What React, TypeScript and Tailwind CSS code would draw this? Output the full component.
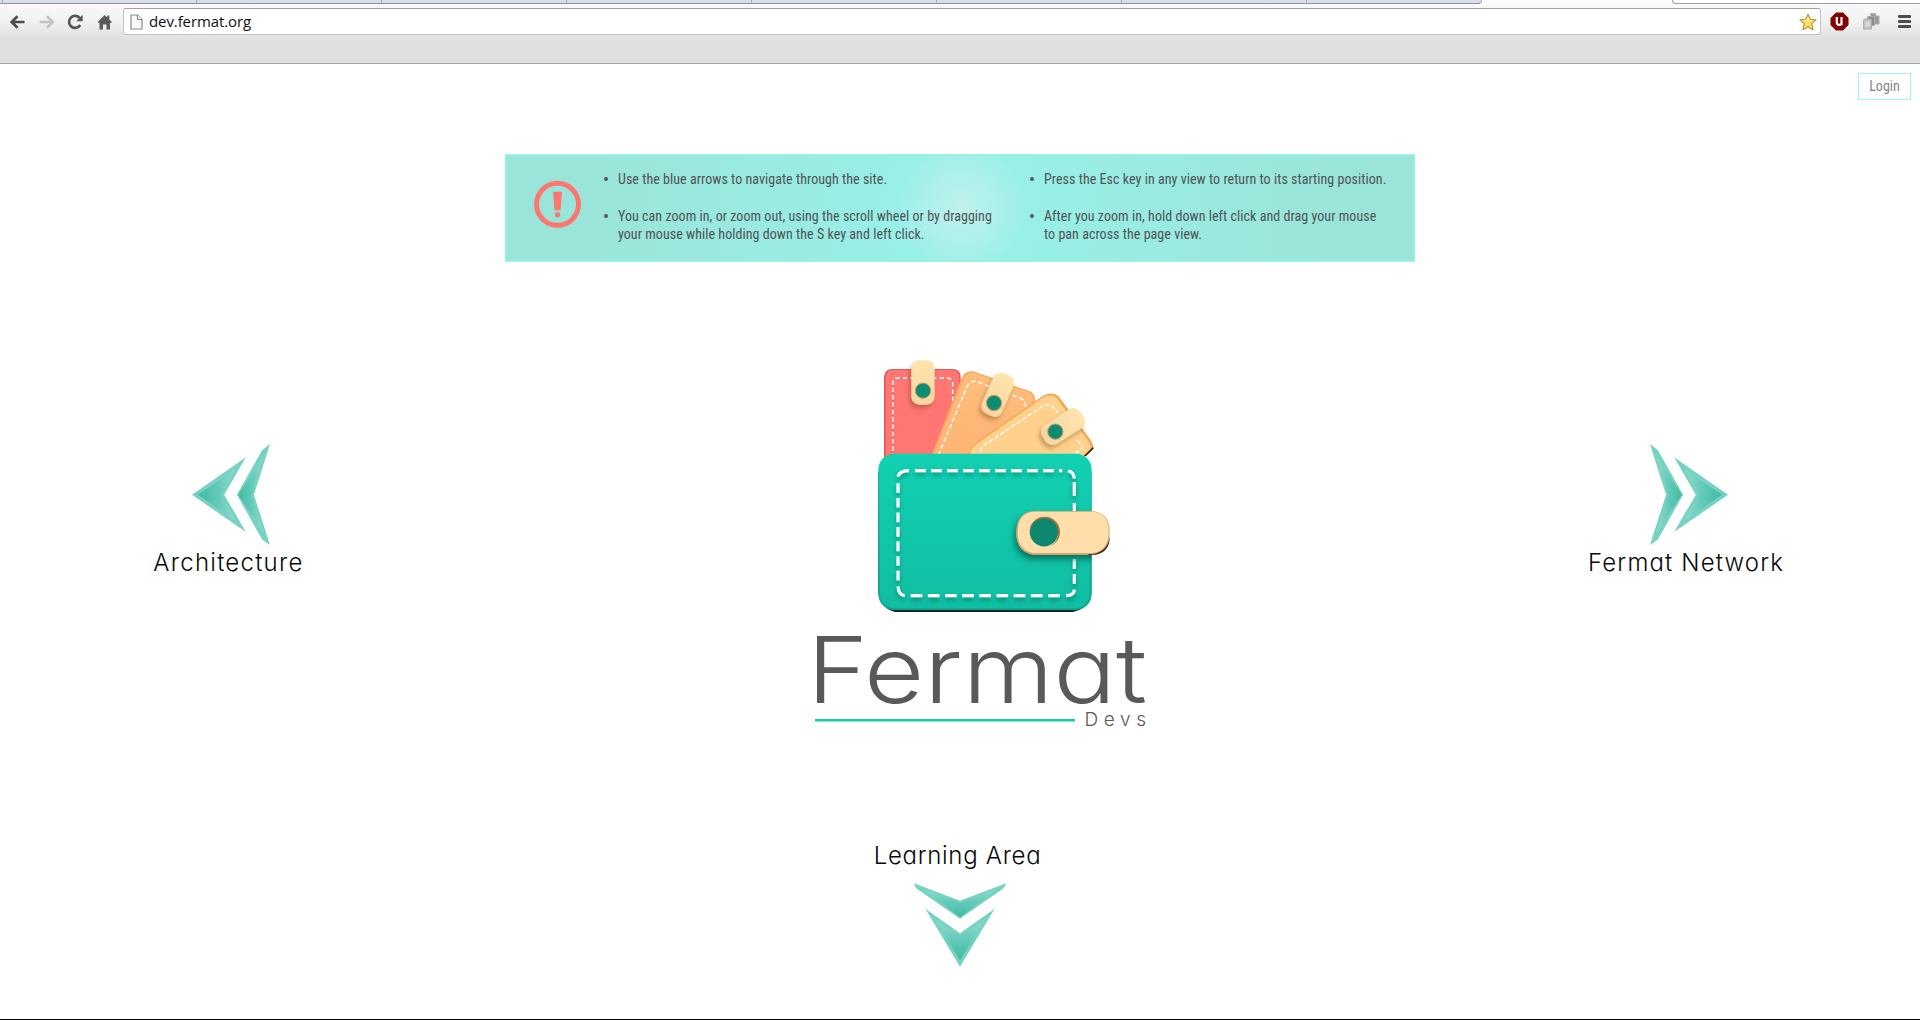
import React from "react";

const LABEL =
  "font-['Inter',sans-serif] font-[260] text-[24px] leading-[30px] text-[#0a0a0a] whitespace-nowrap [font-feature-settings:'cv11']";
const COND = "font-['Roboto',sans-serif] [font-stretch:75%]";

function TabStrip() {
  return (
    <div className="flex h-1 w-full">
      <div className="h-1 w-[2px] border-b border-[#9b9eae] bg-[#d9dfe8]" />
      {[0, 1, 2, 3, 4, 5, 6, 7].map((i) => (
        <div
          key={i}
          className={
            "h-1 border-b border-l border-b-[#9093a6] border-l-[#a9adba] bg-[#d9dfe8] " +
            (i === 0 ? "w-[194px]" : i === 7 ? "w-[176px] rounded-br-[4px] border-r border-r-[#a9adba]" : "w-[185px]")
          }
        />
      ))}
      <div className="h-1 flex-1 bg-[#fbfbfb]" />
      <div className="h-1 w-[248px] rounded-bl-[4px] border-b border-l border-[#9d9d9d] bg-white" />
    </div>
  );
}

function Browser() {
  return (
    <header className="h-16 shrink-0 border-b border-[#a2a2a2] bg-[linear-gradient(#fbfbfb_0px,#f1f1f1_22px,#e1e1e1_38px,#dfdfdf_62px)]">
      <TabStrip />
      <div className="flex h-[35px] items-center">
        <svg className="ml-[9px] h-4 w-4" viewBox="0 0 16 16" fill="none" stroke="#4b4b4b" strokeWidth="2.7">
          <path d="M15.500 8H2.500M8.500 2.200 2.700 8l5.800 5.800" />
        </svg>
        <svg className="ml-[13px] h-4 w-4" viewBox="0 0 16 16" fill="none" stroke="#c3c3c3" strokeWidth="2.7">
          <path d="M1.500 8h13M9 2.200l5.800 5.800-5.800 5.800" />
        </svg>
        <svg className="ml-[13px] h-4 w-4" viewBox="0 0 16 16" fill="none">
          <path d="M12.800 4.200A6 6 0 1 0 13.200 11" stroke="#555" strokeWidth="2.700" />
          <path d="M15.600 .8v6.400H9.200z" fill="#555" />
        </svg>
        <svg className="ml-3.5 h-4 w-4" viewBox="0 0 16 16" fill="#5a5a5a">
          <path d="M7.500 1 .6 8.200 1.700 9 2.500 8.400V15.500H6V10.500H9.500V15.500H13V8.400L14 9 15 8.200 12.300 5.400V1.500H10.300V3.500Z" />
        </svg>
        <div className="ml-[10px] flex h-[27px] w-[1698px] items-center rounded-[3px] border border-[#c4c4c4] border-t-[#a2a2a2] bg-white">
          <svg className="ml-[6px] h-4 w-[13px]" viewBox="0 0 13 16" fill="#f8f8f8" stroke="#8a8a8a" strokeWidth="1.200">
            <path d="M1 1h6.500L12 5.500V15H1z" />
            <path d="M7.500 1v4.500H12" fill="#fff" />
          </svg>
          <span className="mt-[-2px] ml-1.5 font-['Open_Sans',sans-serif] text-[15px] leading-5 tracking-[-0.1px] text-[#111]">
            dev.fermat.org
          </span>
          <svg className="mr-[3px] ml-auto h-[18px] w-[18px]" viewBox="0 0 18 18">
            <path
              d="M9 1.200 11.300 6.300 17 6.800 12.700 10.700 14 16.700 9 13.800 4 16.700 5.300 10.700 1 6.800 6.700 6.300Z"
              fill="#ffe066"
              stroke="#c58a3c"
              strokeWidth="1.100"
              strokeLinejoin="round"
            />
            <path d="M9 3.500 10.500 7.300 14 7.600 4 8.500 7.300 7.300Z" fill="#fff2a8" />
          </svg>
        </div>
        <svg className="ml-[9px] h-[19px] w-[19px]" viewBox="0 0 19 19">
          <path d="M6 .5h7L18.500 6v7L13 18.500H6L.5 13V6z" fill="#800000" />
          <path d="M6.800 5v5.500q0 2.300 2.500 2.300 2.200 0 2.200-2V5v8.300" fill="none" stroke="#fff" strokeWidth="2.200" />
        </svg>
        <svg className="ml-[14px] h-[17px] w-[17px]" viewBox="0 0 17 17" stroke="#aaa">
          <path d="M7.500.7h5V3H16v8h-6z" fill="#999" />
          <path d="M4.500 3.500h7v9h-7z" fill="#8b8b8b" />
          <path d="M.6 7.500q0-1.500 1.500-1.500H7q1.500 0 1.500 1.500V16H.6z" fill="#c4c4c4" />
          <path d="M3 9h3.500v4.500H3z" fill="#ddd" stroke="none" />
        </svg>
        <div className="ml-[18px] flex w-[13px] flex-col gap-[2px]">
          <div className="h-[3px] rounded-[1px] bg-[#4d4f4d]" />
          <div className="h-[3px] rounded-[1px] bg-[#4d4f4d]" />
          <div className="h-[3px] rounded-[1px] bg-[#4d4f4d]" />
        </div>
      </div>
    </header>
  );
}

function Tip({ children }: { children: React.ReactNode }) {
  return (
    <li className="flex">
      <span className="mt-[7px] mr-[10px] h-1 w-1 shrink-0 rounded-full bg-[#55585b]" />
      <span>{children}</span>
    </li>
  );
}

function Banner() {
  return (
    <section className="mx-auto mt-[54px] flex h-[108px] w-[910px] shrink-0 border-2 border-[#98f0e7] bg-[radial-gradient(circle_at_455px_52px,#c0f1ec_0px,#aaf0ea_40px,#98f0e7_66px,#9ae6db_320px,#9ae4d9_460px)]">
      <svg className="mt-[24px] ml-[26px] h-12 w-12 shrink-0" viewBox="0 0 48 48">
        <circle cx="24.500" cy="24.300" r="21" fill="none" stroke="#ff766f" strokeWidth="5" />
        <path d="M20 11.800h9L27.500 30.300h-6z" fill="#ff766f" />
        <circle cx="24.500" cy="34.700" r="2.700" fill="#ff766f" />
      </svg>
      <div
        className={
          COND + " flex pt-[14px] pl-[23px] text-[14px] leading-[18px] tracking-[0.045px] whitespace-nowrap text-[#505356]"
        }
      >
        <ul className="flex w-[426px] flex-col gap-[19px]">
          <Tip>Use the blue arrows to navigate through the site.</Tip>
          <Tip>
            You can zoom in, or zoom out, using the scroll wheel or by dragging
            <br />
            your mouse while holding down the S key and left click.
          </Tip>
        </ul>
        <ul className="flex flex-col gap-[19px]">
          <Tip>Press the Esc key in any view to return to its starting position.</Tip>
          <Tip>
            After you zoom in, hold down left click and drag your mouse
            <br />
            to pan across the page view.
          </Tip>
        </ul>
      </div>
    </section>
  );
}

function Arrow({ id, className }: { id: string; className: string }) {
  return (
    <svg className={className} viewBox="0 0 233 303" preserveAspectRatio="none">
      <defs>
        <linearGradient id={id + "a"} x1="0" x2="1">
          <stop offset="0" stopColor="#40baa2" />
          <stop offset=".55" stopColor="#65cbb8" />
          <stop offset="1" stopColor="#93dacf" />
        </linearGradient>
      </defs>
      <path d="M0 152 161 40 96 152 161 264Z" fill="#76d2c3" />
      <path d="M18 152 130 75 88 152 130 229Z" fill={"url(#" + id + "a)"} />
      <path d="M134 152 210 18 233 0 185 152 233 303 210 287Z" fill="#76d2c3" />
      <path d="M138 152 214 38 178 152 214 267Z" fill={"url(#" + id + "a)"} />
    </svg>
  );
}

function DownArrow() {
  return (
    <svg className="mt-[12px] h-[84px] w-[92px]" viewBox="0 0 276 251">
      <defs>
        <linearGradient id="dn" x1="0" x2="0" y1="0" y2="1">
          <stop offset="0" stopColor="#93dacf" />
          <stop offset=".45" stopColor="#65cbb8" />
          <stop offset="1" stopColor="#40baa2" />
        </linearGradient>
      </defs>
      <path d="M0 0 138 53 276 0Q272 16 256 24L138 107 16 22Q3 15 0 0Z" fill="#76d2c3" />
      <path d="M30 18 138 59 246 18 138 102Z" fill="url(#dn)" />
      <path d="M34 77 138 150 242 77 138 251Z" fill="#76d2c3" />
      <path d="M66 111 138 158 210 111 138 233Z" fill="url(#dn)" />
    </svg>
  );
}

function Wallet() {
  return (
    <svg className="ml-[70px] h-[270px] w-[250px]" viewBox="0 0 750 810">
      <defs>
        <linearGradient id="body" x1="0" y1="0" x2="0" y2="1">
          <stop offset="0" stopColor="#12d0b1" />
          <stop offset="1" stopColor="#10bea2" />
        </linearGradient>
        <linearGradient id="edge" x1="0" y1="0" x2="0" y2="1">
          <stop offset="0" stopColor="#08d5b2" />
          <stop offset="1" stopColor="#0ba58c" />
        </linearGradient>
        <linearGradient id="orange" x1="0" y1="0" x2="0" y2="1">
          <stop offset="0" stopColor="#ffbd7a" />
          <stop offset="1" stopColor="#ffb376" />
        </linearGradient>
        <linearGradient id="strap" x1="0" y1="0" x2="0" y2="1">
          <stop offset="0" stopColor="#ffe4ae" />
          <stop offset="1" stopColor="#f9d5a2" />
        </linearGradient>
        <filter id="soft" x="-30%" y="-30%" width="160%" height="160%">
          <feDropShadow dx="-6" dy="10" stdDeviation="7" floodColor="#5a3010" floodOpacity=".35" />
        </filter>
        <filter id="deep" x="-30%" y="-30%" width="160%" height="170%">
          <feDropShadow dx="-6" dy="14" stdDeviation="9" floodColor="#03483c" floodOpacity=".65" />
        </filter>
        <filter id="stitch" x="-10%" y="-10%" width="120%" height="120%">
          <feDropShadow dx="0" dy="9" stdDeviation="6" floodColor="#056454" floodOpacity=".6" />
        </filter>
        <clipPath id="top">
          <path d="M0 0H750V330H0Z" />
        </clipPath>
        <clipPath id="green">
          <rect x="25" y="310" width="640" height="475" rx="48" />
        </clipPath>
      </defs>

      <g clipPath="url(#top)">
        <path d="M42 330V80Q44 58 66 57H250Q272 58 272 82V330Z" fill="#e05d5d" />
        <path d="M47 330V82Q48 61 68 60H246Q267 62 267 84V330Z" fill="#ff7673" />
        <path d="M69 330V96Q70 84 84 84H232Q248 86 248 100V200" fill="none" stroke="#c54d4e" strokeOpacity=".5" strokeWidth="5" strokeDasharray="14 8" />
        <path d="M69 325V96Q70 84 84 84H232Q248 86 248 100V200" fill="none" stroke="#fff" strokeWidth="4.500" strokeDasharray="14 8" />
        <g filter="url(#soft)">
          <rect x="124" y="31" width="70" height="133" rx="24" fill="url(#strap)" />
        </g>

        <path d="M183 320 274 86Q284 61 310 64L480 124Q500 135 494 160L430 330Z" fill="#f1ae62" />
        <path d="M188 320 281 88Q290 66 314 69L478 128Q494 138 487 160L430 330Z" fill="url(#orange)" />
        <path d="M205 316 292 108Q299 91 318 94L452 145Q470 153 466 174L458 200" fill="none" stroke="#fff" strokeWidth="4.500" strokeDasharray="14 8" />
        <g filter="url(#soft)">
          <rect x="350" y="68" width="66" height="132" rx="24" fill="url(#strap)" transform="rotate(24 383 134)" />
        </g>

        <path d="M298 312Q300 290 315 280L510 143Q540 122 565 137L660 267Q674 287 668 295L645 320H298Z" fill="#edae5c" />
        <path d="M301 312Q303 293 317 284L514 146Q540 130 558 142L652 270Q664 285 661 298L640 320H301Z" fill="#ffd18c" />
        <path d="M669 290 671 296 648 319H640Z" fill="#493013" />
        <path d="M332 304Q332 292 346 283L515 171Q535 156 552 174L562 188M622 272Q642 290 632 302L612 310" fill="none" stroke="#fff" strokeWidth="4.500" strokeDasharray="13 7" />
        <g filter="url(#soft)">
          <rect x="545" y="162" width="68" height="136" rx="26" fill="url(#strap)" transform="rotate(58 579 230)" />
        </g>
      </g>
      <g fill="#0d8c72" stroke="#d79c5b" strokeWidth="3">
        <circle cx="159" cy="122" r="23" />
        <circle cx="372" cy="159" r="23" />
        <circle cx="556" cy="245" r="23" />
      </g>

      <path d="M25 365H664V730Q655 778 608 786H76Q32 776 25 725Z" fill="#05251f" />
      <rect x="25" y="311" width="640" height="469" rx="48" fill="url(#edge)" />
      <rect x="30" y="319" width="629" height="456" rx="44" fill="url(#body)" />
      <g filter="url(#stitch)" fill="none" stroke="#fff" strokeWidth="9.500">
        <path d="M135 362H577" strokeDasharray="33 15" />
        <path d="M122 737H575" strokeDasharray="35 16.500" />
        <path d="M84 400V695" strokeDasharray="29 14.700" />
        <path d="M613 396V437M613 459V500M613 627V657M613 672V702" />
        <path d="M84 380Q88 362 117 362M594 363Q611 365 613 386M84 709Q86 736 104 737M588 737Q612 737 613 719" />
      </g>
      <g clipPath="url(#green)">
        <g filter="url(#deep)">
          <path d="M490 484H670Q719 490 719 545Q718 608 670 614H490Q439 605 439 548Q440 488 490 484Z" fill="#d8a56d" />
        </g>
      </g>
      <path d="M490 484H670Q719 490 719 545Q718 608 670 614H490Q439 605 439 548Q440 488 490 484Z" fill="#d8a56d" />
      <path d="M655 612H670Q714 604 719 558Q721 605 678 614H655Z" fill="#3b2818" />
      <path d="M490 485H670Q716 490 716 543Q715 604 668 609H490Q443 601 443 546Q444 489 490 485Z" fill="#ffdeab" />
      <circle cx="524" cy="546" r="46" fill="#a8713c" />
      <circle cx="521" cy="550" r="43" fill="#ffe5b6" />
      <circle cx="522" cy="547" r="42.500" fill="#0e876e" />
    </svg>
  );
}

function Wordmark() {
  return (
    <svg className="h-[120px] w-[360px] overflow-visible" viewBox="0 0 360 120">
      <g fontFamily="Inter, sans-serif" fill="#58595b" style={{ fontFeatureSettings: "'cv11'" }}>
        <text x="7" y="82.500" fontSize="92" fontWeight="340" textLength="340" lengthAdjust="spacingAndGlyphs">
          Fermat
        </text>
        <text x="284.500" y="106" fontSize="19" fontWeight="300" textLength="61.500" lengthAdjust="spacing">
          Devs
        </text>
      </g>
      <path d="M15 100.300H275" stroke="#14cdaa" strokeWidth="2.600" />
    </svg>
  );
}

export default function App() {
  return (
    <div className="flex h-[1020px] w-[1920px] flex-col overflow-hidden border-b border-black bg-white">
      <Browser />
      <div className="flex shrink-0 justify-end pt-[9px] pr-[9px]">
        <button className={COND + " h-[27px] w-[53px] border border-[#9ff7f1] text-[14px] leading-[25px] text-[#858585]"}>
          Login
        </button>
      </div>
      <Banner />
      <main className="mt-[88px] flex shrink-0 items-start pl-[148px]">
        <div className="flex w-[160px] flex-col items-center pt-[94px]">
          <Arrow id="left" className="ml-[5px] h-[101px] w-[78px]" />
          <span className={LABEL + " mt-[3px] ml-[1px] tracking-[1.25px]"}>Architecture</span>
        </div>
        <div className="ml-[492px] flex w-[360px] flex-col">
          <Wallet />
          <Wordmark />
        </div>
        <div className="ml-[418px] flex w-[216px] flex-col items-center pt-[94px]">
          <Arrow id="right" className="ml-[5px] h-[101px] w-[78px] -scale-x-100" />
          <span className={LABEL + " mt-[3px] tracking-[1.15px]"}>Fermat Network</span>
        </div>
      </main>
      <div className="mt-[101px] flex flex-col items-center">
        <span className={LABEL + " mr-[5px] tracking-[0.7px]"}>Learning Area</span>
        <DownArrow />
      </div>
    </div>
  );
}
